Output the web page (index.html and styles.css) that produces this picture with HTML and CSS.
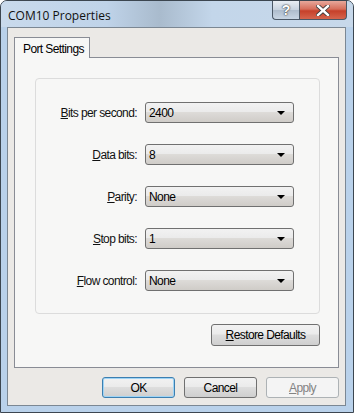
FILE: index.html
```html
<!DOCTYPE html>
<html lang="en">
<head>
    <meta charset="UTF-8">
    <title>COM10 Properties</title>
    <link rel="stylesheet" href="styles.css">
</head>
<body>
    <div class="window">
        <div class="titlebar">
            <span class="title">COM10 Properties</span>
            <div class="caption-buttons">
                <span class="cap help">?</span>
                <span class="cap close">
                    <svg width="14" height="11" viewBox="0 0 14 11">
                        <path d="M2 1 L12 10 M12 1 L2 10" stroke="#3b3b3b" stroke-width="4.2" stroke-linecap="square"/>
                        <path d="M2 1 L12 10 M12 1 L2 10" stroke="#fff" stroke-width="2.4" stroke-linecap="square"/>
                    </svg>
                </span>
            </div>
        </div>

        <div class="client">
            <div class="tabs">
                <span class="tab">Port Settings</span>
            </div>
            <div class="panel">
                <div class="group">
                    <div class="row">
                        <label class="label"><u>B</u>its per second:</label>
                        <div class="combo">2400</div>
                    </div>
                    <div class="row">
                        <label class="label"><u>D</u>ata bits:</label>
                        <div class="combo">8</div>
                    </div>
                    <div class="row">
                        <label class="label"><u>P</u>arity:</label>
                        <div class="combo">None</div>
                    </div>
                    <div class="row">
                        <label class="label"><u>S</u>top bits:</label>
                        <div class="combo">1</div>
                    </div>
                    <div class="row">
                        <label class="label"><u>F</u>low control:</label>
                        <div class="combo">None</div>
                    </div>
                </div>
                <div class="restore-row">
                    <button class="btn restore"><u>R</u>estore Defaults</button>
                </div>
            </div>
            <div class="actions">
                <button class="btn default">OK</button>
                <button class="btn">Cancel</button>
                <button class="btn disabled"><u>A</u>pply</button>
            </div>
        </div>
    </div>
</body>
</html>
```

FILE: styles.css
```css
body {
    margin: 0;
    background: #fff;
    font-family: "Liberation Sans", Arial, sans-serif;
    font-size: 12px;
    letter-spacing: -0.6px;
    color: #000;
}
.window {
    box-sizing: border-box;
    width: 354px;
    height: 413px;
    border: 1px solid #3c4650;
    border-radius: 7px 7px 0 0;
    background: #b9d1ea;
    padding: 0 7px 6px 6px;
    display: flex;
    flex-direction: column;
}
.titlebar {
    height: 26px;
    margin: 0 -7px 0 -6px;
    padding: 0 0 0 7px;
    display: flex;
    justify-content: space-between;
    align-items: flex-start;
    border-radius: 6px 6px 0 0;
    background: linear-gradient(to right, #c9daec 0%, #bfd3e9 30%, #a9bbcd 45%, #c3d6ea 60%, #c7d8ea 100%);
}
.title {
    font-family: "Open Sans", "Liberation Sans", sans-serif;
    font-size: 12px;
    letter-spacing: 0;
    line-height: 30px;
    color: #111;
}
.caption-buttons {
    display: flex;
    margin-right: 6px;
}
.cap {
    height: 18px;
    border: 1px solid #4b5866;
    border-top: none;
    display: flex;
    align-items: center;
    justify-content: center;
}
.help {
    width: 26px;
    border-radius: 0 0 0 4px;
    border-right: none;
    background: linear-gradient(#e9eef4, #c7d2df 50%, #aebccc 51%, #c9d6e4);
    font-family: "Liberation Sans", sans-serif;
    font-weight: bold;
    font-size: 14px;
    letter-spacing: 0;
    color: #fff;
    text-shadow: 0 0 2px #333, 0 0 1px #333;
}
.close {
    width: 46px;
    border-radius: 0 0 4px 0;
    background: linear-gradient(#e7a89b, #d66e5b 45%, #c6402a 55%, #d5654d);
}
.client {
    flex: 1;
    border: 1px solid #7b8793;
    background: #ebe9e6;
    padding: 9px 6px 0 6px;
}
.tabs {
    display: flex;
    height: 20px;
    position: relative;
    z-index: 1;
}
.tab {
    box-sizing: border-box;
    width: 76px;
    height: 21px;
    border: 1px solid #898c95;
    border-bottom: none;
    background: #f7f7f6;
    padding: 4px 0 0 8px;
    white-space: nowrap;
}
.panel {
    box-sizing: border-box;
    height: 311px;
    border: 1px solid #898c95;
    background: #f7f7f6;
    padding: 20px 18px 0 20px;
}
.group {
    box-sizing: border-box;
    height: 236px;
    border: 1px solid #dcdcdc;
    border-radius: 4px;
    padding: 23px 0 0 0;
    display: flex;
    flex-direction: column;
    gap: 21px;
}
.row {
    display: flex;
    align-items: center;
    height: 21px;
}
.label {
    width: 101px;
    text-align: right;
    color: #111;
}
.combo {
    box-sizing: border-box;
    width: 149px;
    height: 21px;
    margin-left: 8px;
    border: 1px solid #707070;
    border-radius: 3px;
    background: linear-gradient(#f2f2f2, #ebebeb 45%, #dddbd8 50%, #cfccc8);
    padding: 3px 0 0 3px;
    position: relative;
}
.combo::after {
    content: "";
    position: absolute;
    right: 8px;
    top: 8px;
    border-left: 4px solid transparent;
    border-right: 4px solid transparent;
    border-top: 4px solid #000;
}
.restore-row {
    display: flex;
    justify-content: flex-end;
    margin-top: 10px;
}
.btn {
    box-sizing: border-box;
    height: 22px;
    border: 1px solid #707070;
    border-radius: 3px;
    background: linear-gradient(#f2f2f2, #ebebeb 45%, #dddddd 50%, #cfcfcf);
    font-family: "Liberation Sans", Arial, sans-serif;
    font-size: 12px;
    letter-spacing: -0.6px;
    color: #000;
    padding: 0;
}
.restore {
    width: 109px;
}
.actions {
    display: flex;
    justify-content: flex-end;
    gap: 9px;
    margin-top: 9px;
}
.actions .btn {
    width: 73px;
    height: 21px;
}
.btn.default {
    border-color: #3c7fb1;
    box-shadow: inset 0 0 0 1px #9fd4f5;
}
.btn.disabled {
    border-color: #adb2b5;
    background: #f4f4f4;
    color: #838383;
}
```
